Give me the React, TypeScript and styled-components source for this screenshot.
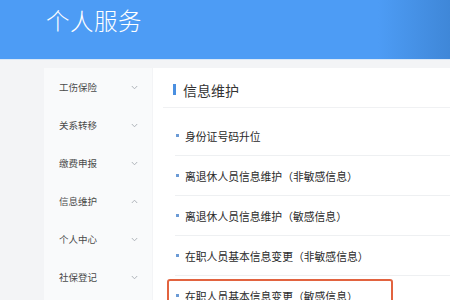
import React from "react";
import styled, { createGlobalStyle } from "styled-components";

const Global = createGlobalStyle`
  html, body { margin: 0; padding: 0; background: #f3f4f6; }
  body { font-family: "Noto Sans CJK SC", "Noto Sans", sans-serif; width: 450px; height: 300px; overflow: hidden; }
`;

const Page = styled.div`
  width: 450px;
  height: 300px;
  overflow: hidden;
  background: #f3f4f6;
`;

const Header = styled.header`
  height: 59px;
  background: linear-gradient(to right, #4d9cf5 0%, #4d9cf5 84%, #3f87d8 100%);
  border-bottom: 1px solid #d9e8f8;
  display: flex;
  align-items: flex-start;
  padding-left: 46px;
  box-sizing: content-box;
`;

const Title = styled.h1`
  margin: 0;
  margin-top: 4px;
  font-size: 23.5px;
  line-height: 32px;
  font-weight: 300;
  color: #ffffff;
  letter-spacing: 0.5px;
`;

const Body = styled.div`
  display: flex;
  padding: 8px 0 0 44px;
  height: 240px;
`;

const Sidebar = styled.nav`
  width: 108px;
  background: #f9fafb;
  display: flex;
  flex-direction: column;
`;

const NavItem = styled.div`
  height: 38px;
  display: flex;
  align-items: center;
  justify-content: space-between;
  padding: 0 14px 0 15px;
  font-size: 9.5px;
  color: #4a4a4a;
`;

const Chevron = ({ up }: { up?: boolean }) => (
  <svg width="7" height="5" viewBox="0 0 7 5">
    <path
      d={up ? "M0.8 4 L3.5 1.2 L6.2 4" : "M0.8 1 L3.5 3.8 L6.2 1"}
      fill="none"
      stroke="#a8adb3"
      strokeWidth="0.9"
    />
  </svg>
);

const Content = styled.main`
  flex: 1;
  background: #ffffff;
  margin-left: 1px;
`;

const SectionHead = styled.div`
  height: 40px;
  margin-left: 10px;
  padding-left: 10px;
  display: flex;
  align-items: center;
  gap: 7px;
  border-bottom: 1px solid #f0f1f3;
  box-sizing: border-box;
  padding-top: 4px;
`;

const Bar = styled.span`
  width: 3px;
  height: 11px;
  background: #4a8fe0;
`;

const SectionTitle = styled.span`
  font-size: 14px;
  color: #333;
`;

const List = styled.ul`
  list-style: none;
  margin: 0;
  padding: 8px 0 0 22px;
`;

const Row = styled.li`
  position: relative;
  height: 40px;
  display: flex;
  align-items: center;
  gap: 6px;
  border-bottom: 1px solid #eef0f2;
  box-sizing: border-box;
  font-size: 10.8px;
  color: #2a2a2a;
  &::before {
    content: "";
    width: 3px;
    height: 3px;
    background: #6b9bd6;
    margin-left: 1px;
  }
`;

const Highlight = styled.div`
  position: absolute;
  left: -8px;
  top: 3px;
  width: 226px;
  height: 40px;
  border: 2px solid #e2633f;
  border-radius: 3px;
  box-sizing: border-box;
  pointer-events: none;
`;

const navItems: { label: string; up?: boolean }[] = [
  { label: "工伤保险" },
  { label: "关系转移" },
  { label: "缴费申报" },
  { label: "信息维护", up: true },
  { label: "个人中心" },
  { label: "社保登记" },
];

const rows = [
  "身份证号码升位",
  "离退休人员信息维护（非敏感信息）",
  "离退休人员信息维护（敏感信息）",
  "在职人员基本信息变更（非敏感信息）",
  "在职人员基本信息变更（敏感信息）",
];

export default function App() {
  return (
    <Page>
      <Global />
      <Header>
        <Title>个人服务</Title>
      </Header>
      <Body>
        <Sidebar>
          {navItems.map((n) => (
            <NavItem key={n.label}>
              <span>{n.label}</span>
              <Chevron up={n.up} />
            </NavItem>
          ))}
        </Sidebar>
        <Content>
          <SectionHead>
            <Bar />
            <SectionTitle>信息维护</SectionTitle>
          </SectionHead>
          <List>
            {rows.map((r, i) => (
              <Row key={r}>
                {r}
                {i === rows.length - 1 && <Highlight />}
              </Row>
            ))}
          </List>
        </Content>
      </Body>
    </Page>
  );
}
